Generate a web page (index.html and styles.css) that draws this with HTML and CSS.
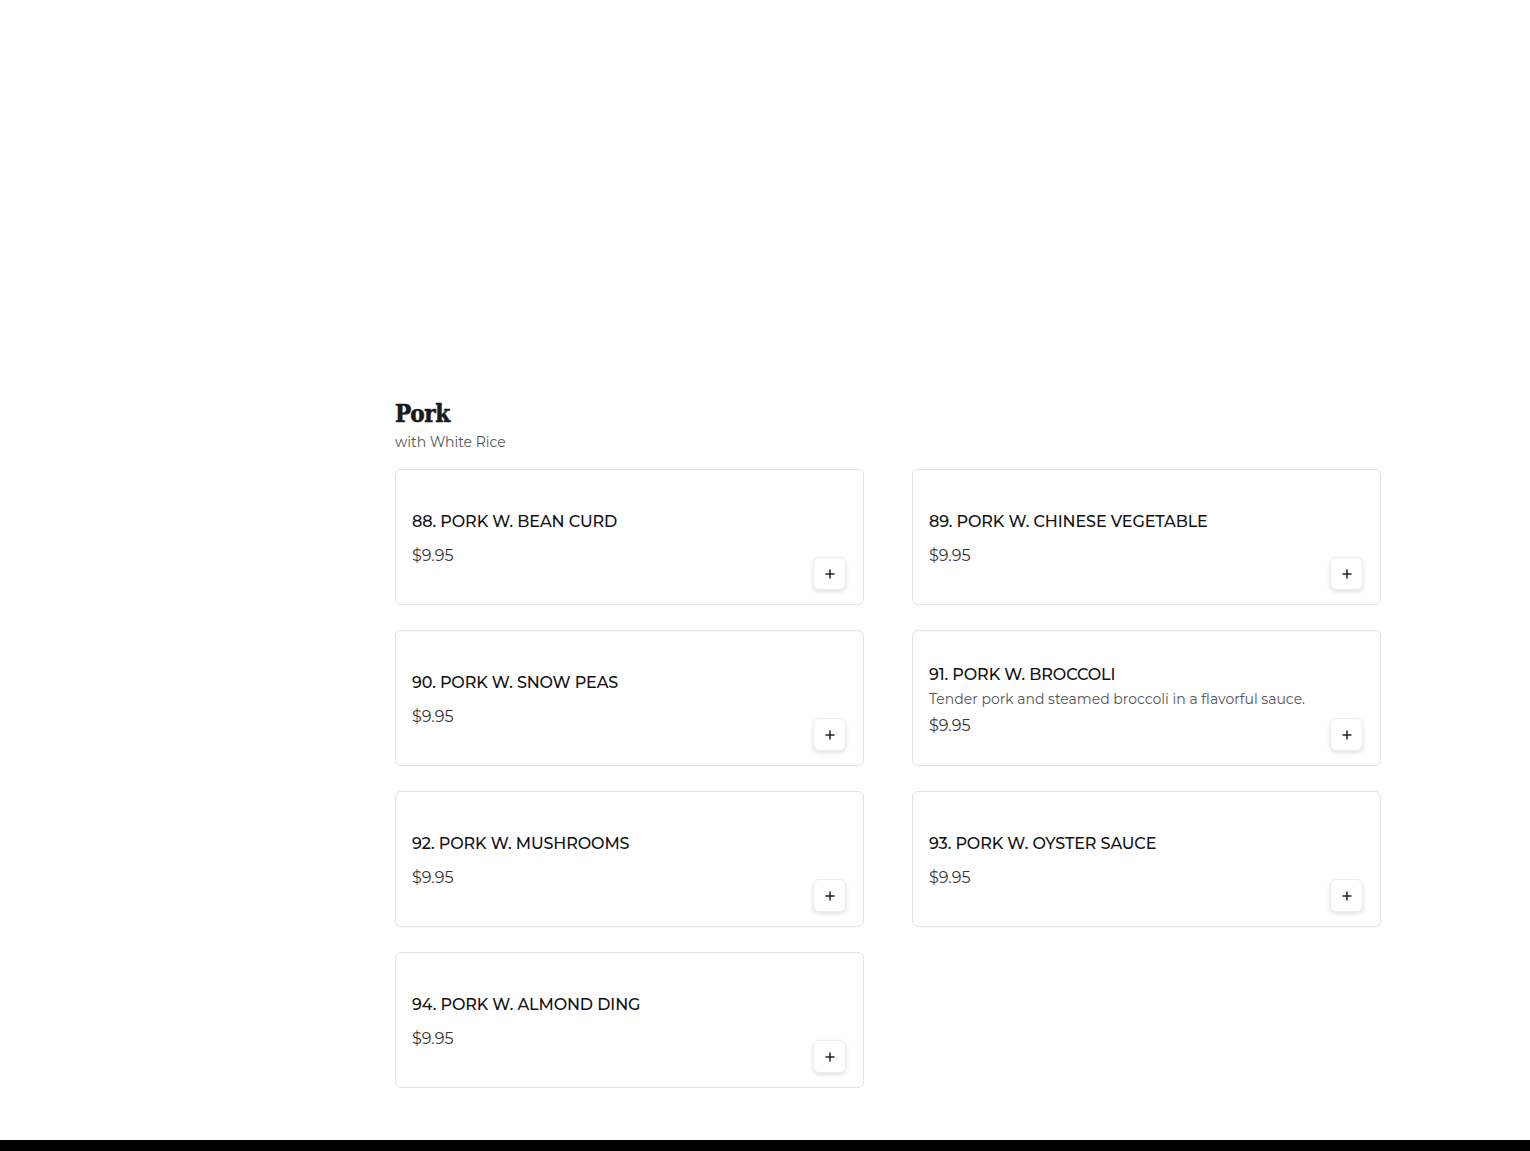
FILE: index.html
```html
<!DOCTYPE html>
<html>
<head>
<meta charset="utf-8">
<link rel="stylesheet" href="styles.css">
</head>
<body>
<main class="page">
  <section class="category">
    <h2 class="cat-title">Pork</h2>
    <p class="cat-sub">with White Rice</p>
    <div class="grid">
      <div class="card"><div class="info"><h3 class="name">88. PORK W. BEAN CURD</h3><div class="price">$9.95</div></div><button class="add" aria-label="Add"><svg viewBox="0 0 12 12" width="12" height="12"><path d="M6 1.5v9M1.5 6h9" stroke="#222" stroke-width="1.5" fill="none"/></svg></button></div>
      <div class="card"><div class="info"><h3 class="name">89. PORK W. CHINESE VEGETABLE</h3><div class="price">$9.95</div></div><button class="add" aria-label="Add"><svg viewBox="0 0 12 12" width="12" height="12"><path d="M6 1.5v9M1.5 6h9" stroke="#222" stroke-width="1.5" fill="none"/></svg></button></div>
      <div class="card"><div class="info"><h3 class="name">90. PORK W. SNOW PEAS</h3><div class="price">$9.95</div></div><button class="add" aria-label="Add"><svg viewBox="0 0 12 12" width="12" height="12"><path d="M6 1.5v9M1.5 6h9" stroke="#222" stroke-width="1.5" fill="none"/></svg></button></div>
      <div class="card"><div class="info"><h3 class="name">91. PORK W. BROCCOLI</h3><p class="desc">Tender pork and steamed broccoli in a flavorful sauce.</p><div class="price tight">$9.95</div></div><button class="add" aria-label="Add"><svg viewBox="0 0 12 12" width="12" height="12"><path d="M6 1.5v9M1.5 6h9" stroke="#222" stroke-width="1.5" fill="none"/></svg></button></div>
      <div class="card"><div class="info"><h3 class="name">92. PORK W. MUSHROOMS</h3><div class="price">$9.95</div></div><button class="add" aria-label="Add"><svg viewBox="0 0 12 12" width="12" height="12"><path d="M6 1.5v9M1.5 6h9" stroke="#222" stroke-width="1.5" fill="none"/></svg></button></div>
      <div class="card"><div class="info"><h3 class="name">93. PORK W. OYSTER SAUCE</h3><div class="price">$9.95</div></div><button class="add" aria-label="Add"><svg viewBox="0 0 12 12" width="12" height="12"><path d="M6 1.5v9M1.5 6h9" stroke="#222" stroke-width="1.5" fill="none"/></svg></button></div>
      <div class="card"><div class="info"><h3 class="name">94. PORK W. ALMOND DING</h3><div class="price">$9.95</div></div><button class="add" aria-label="Add"><svg viewBox="0 0 12 12" width="12" height="12"><path d="M6 1.5v9M1.5 6h9" stroke="#222" stroke-width="1.5" fill="none"/></svg></button></div>
    </div>
  </section>
</main>
<footer class="footer"></footer>
</body>
</html>
```
FILE: styles.css
```css
html, body {
  margin: 0;
  padding: 0;
  background: #fff;
}
body {
  font-family: "Montserrat", "Open Sans", "Liberation Sans", sans-serif;
  color: #222;
}
.page {
  width: 986px;
  margin: 0 0 0 395px;
  padding: 398px 0 52px 0;
}
.cat-title {
  margin: 0;
  font-family: "DejaVu Serif Condensed", "DejaVu Serif", serif;
  font-weight: 700;
  font-size: 24px;
  line-height: 32px;
  color: #1a1a1a;
  -webkit-text-stroke: 0.6px #1a1a1a;
  letter-spacing: -0.4px;
}
.cat-sub {
  margin: 2px 0 0 0;
  font-size: 14px;
  line-height: 20px;
  color: #555;
}
.grid {
  margin-top: 17px;
  display: grid;
  grid-template-columns: 1fr 1fr;
  column-gap: 48px;
  row-gap: 25px;
}
.card {
  box-sizing: border-box;
  height: 136px;
  border: 1px solid #e2e2e2;
  border-radius: 6px;
  padding: 0 16px 14px 16px;
  display: flex;
  align-items: center;
}
.info {
  flex: 1;
  min-width: 0;
  padding-top: 18px;
}
.name {
  margin: 0;
  font-size: 16px;
  font-weight: 500;
  letter-spacing: -0.1px;
  line-height: 22px;
  color: #111;
}
.desc {
  margin: 3px 0 0 0;
  font-size: 14px;
  line-height: 20px;
  color: #555;
}
.price {
  margin-top: 12px;
  font-size: 16px;
  line-height: 22px;
  color: #333;
}
.price.tight {
  margin-top: 6px;
}
.add {
  align-self: flex-end;
  box-sizing: border-box;
  width: 33px;
  height: 33px;
  padding: 0;
  border: 1px solid #ececec;
  border-radius: 6px;
  background: #fff;
  box-shadow: 0 2px 4px rgba(0,0,0,0.12);
  display: flex;
  align-items: center;
  justify-content: center;
  margin-right: 1px;
}
.footer {
  height: 11px;
  background: #000;
}
```
